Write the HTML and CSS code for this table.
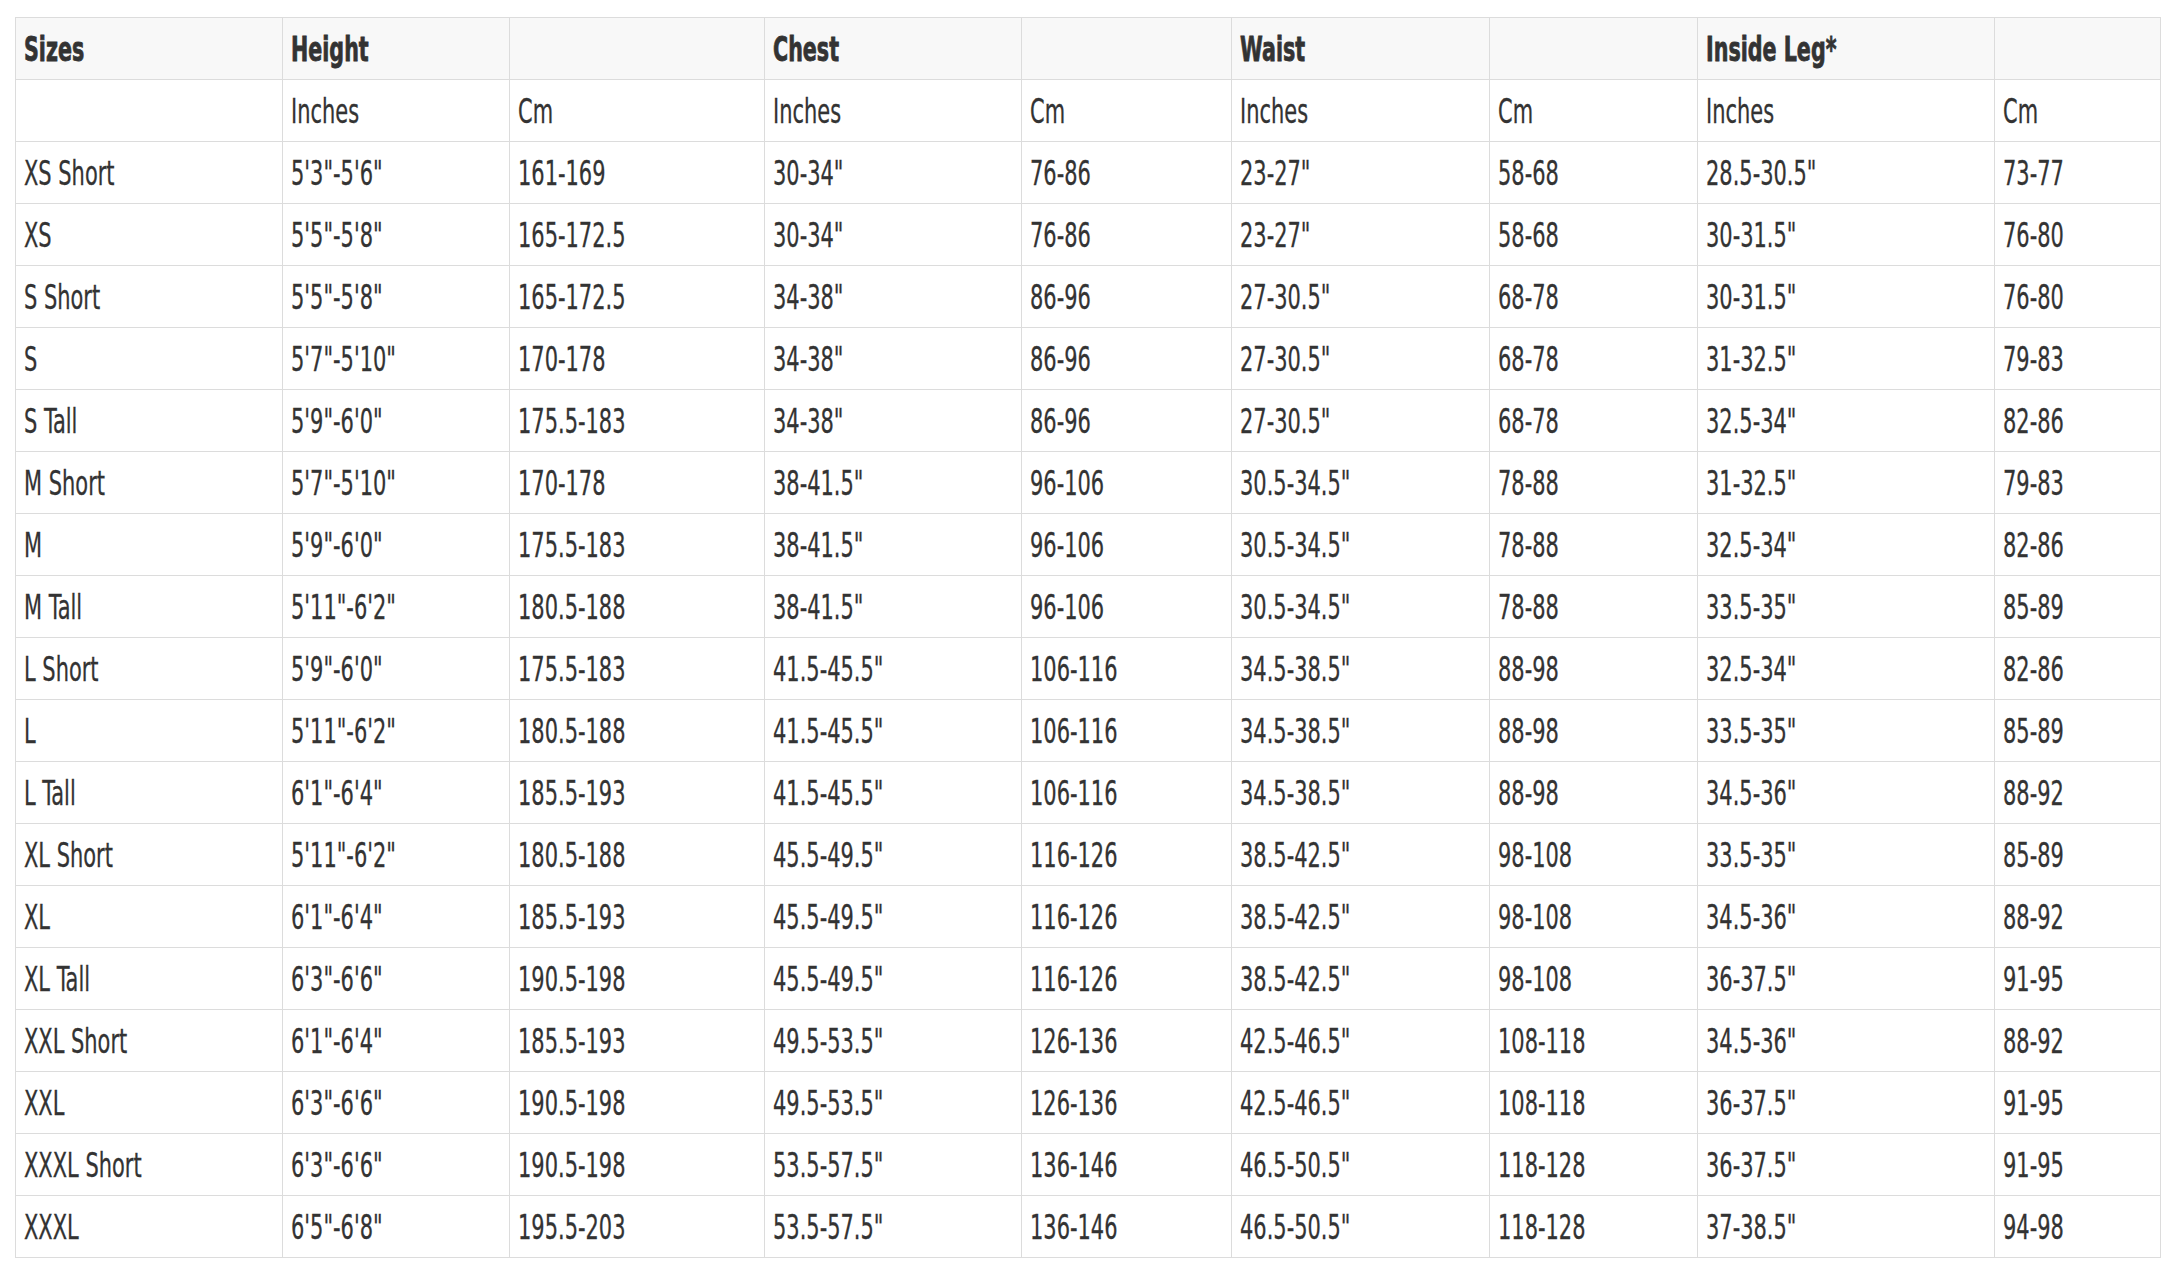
FILE: index.html
```html
<!DOCTYPE html>
<html lang="en">
<head>
<meta charset="utf-8">
<title>Size Chart</title>
<link rel="stylesheet" href="styles.css">
</head>
<body>
<div class="page">
<table class="sizes">
<colgroup>
<col class="c1"><col class="c2"><col class="c3"><col class="c4"><col class="c5"><col class="c6"><col class="c7"><col class="c8"><col class="c9">
</colgroup>
<thead>
<tr class="head"><th><span class="t">Sizes</span></th><th><span class="t">Height</span></th><th></th><th><span class="t">Chest</span></th><th></th><th><span class="t">Waist</span></th><th></th><th><span class="t">Inside Leg*</span></th><th></th></tr>
</thead>
<tbody>
<tr><td></td><td><span class="t">Inches</span></td><td><span class="t">Cm</span></td><td><span class="t">Inches</span></td><td><span class="t">Cm</span></td><td><span class="t">Inches</span></td><td><span class="t">Cm</span></td><td><span class="t">Inches</span></td><td><span class="t">Cm</span></td></tr>
<tr><td><span class="t">XS Short</span></td><td><span class="t">5'3"-5'6"</span></td><td><span class="t">161-169</span></td><td><span class="t">30-34"</span></td><td><span class="t">76-86</span></td><td><span class="t">23-27"</span></td><td><span class="t">58-68</span></td><td><span class="t">28.5-30.5"</span></td><td><span class="t">73-77</span></td></tr>
<tr><td><span class="t">XS</span></td><td><span class="t">5'5"-5'8"</span></td><td><span class="t">165-172.5</span></td><td><span class="t">30-34"</span></td><td><span class="t">76-86</span></td><td><span class="t">23-27"</span></td><td><span class="t">58-68</span></td><td><span class="t">30-31.5"</span></td><td><span class="t">76-80</span></td></tr>
<tr><td><span class="t">S Short</span></td><td><span class="t">5'5"-5'8"</span></td><td><span class="t">165-172.5</span></td><td><span class="t">34-38"</span></td><td><span class="t">86-96</span></td><td><span class="t">27-30.5"</span></td><td><span class="t">68-78</span></td><td><span class="t">30-31.5"</span></td><td><span class="t">76-80</span></td></tr>
<tr><td><span class="t">S</span></td><td><span class="t">5'7"-5'10"</span></td><td><span class="t">170-178</span></td><td><span class="t">34-38"</span></td><td><span class="t">86-96</span></td><td><span class="t">27-30.5"</span></td><td><span class="t">68-78</span></td><td><span class="t">31-32.5"</span></td><td><span class="t">79-83</span></td></tr>
<tr><td><span class="t">S Tall</span></td><td><span class="t">5'9"-6'0"</span></td><td><span class="t">175.5-183</span></td><td><span class="t">34-38"</span></td><td><span class="t">86-96</span></td><td><span class="t">27-30.5"</span></td><td><span class="t">68-78</span></td><td><span class="t">32.5-34"</span></td><td><span class="t">82-86</span></td></tr>
<tr><td><span class="t">M Short</span></td><td><span class="t">5'7"-5'10"</span></td><td><span class="t">170-178</span></td><td><span class="t">38-41.5"</span></td><td><span class="t">96-106</span></td><td><span class="t">30.5-34.5"</span></td><td><span class="t">78-88</span></td><td><span class="t">31-32.5"</span></td><td><span class="t">79-83</span></td></tr>
<tr><td><span class="t">M</span></td><td><span class="t">5'9"-6'0"</span></td><td><span class="t">175.5-183</span></td><td><span class="t">38-41.5"</span></td><td><span class="t">96-106</span></td><td><span class="t">30.5-34.5"</span></td><td><span class="t">78-88</span></td><td><span class="t">32.5-34"</span></td><td><span class="t">82-86</span></td></tr>
<tr><td><span class="t">M Tall</span></td><td><span class="t">5'11"-6'2"</span></td><td><span class="t">180.5-188</span></td><td><span class="t">38-41.5"</span></td><td><span class="t">96-106</span></td><td><span class="t">30.5-34.5"</span></td><td><span class="t">78-88</span></td><td><span class="t">33.5-35"</span></td><td><span class="t">85-89</span></td></tr>
<tr><td><span class="t">L Short</span></td><td><span class="t">5'9"-6'0"</span></td><td><span class="t">175.5-183</span></td><td><span class="t">41.5-45.5"</span></td><td><span class="t">106-116</span></td><td><span class="t">34.5-38.5"</span></td><td><span class="t">88-98</span></td><td><span class="t">32.5-34"</span></td><td><span class="t">82-86</span></td></tr>
<tr><td><span class="t">L</span></td><td><span class="t">5'11"-6'2"</span></td><td><span class="t">180.5-188</span></td><td><span class="t">41.5-45.5"</span></td><td><span class="t">106-116</span></td><td><span class="t">34.5-38.5"</span></td><td><span class="t">88-98</span></td><td><span class="t">33.5-35"</span></td><td><span class="t">85-89</span></td></tr>
<tr><td><span class="t">L Tall</span></td><td><span class="t">6'1"-6'4"</span></td><td><span class="t">185.5-193</span></td><td><span class="t">41.5-45.5"</span></td><td><span class="t">106-116</span></td><td><span class="t">34.5-38.5"</span></td><td><span class="t">88-98</span></td><td><span class="t">34.5-36"</span></td><td><span class="t">88-92</span></td></tr>
<tr><td><span class="t">XL Short</span></td><td><span class="t">5'11"-6'2"</span></td><td><span class="t">180.5-188</span></td><td><span class="t">45.5-49.5"</span></td><td><span class="t">116-126</span></td><td><span class="t">38.5-42.5"</span></td><td><span class="t">98-108</span></td><td><span class="t">33.5-35"</span></td><td><span class="t">85-89</span></td></tr>
<tr><td><span class="t">XL</span></td><td><span class="t">6'1"-6'4"</span></td><td><span class="t">185.5-193</span></td><td><span class="t">45.5-49.5"</span></td><td><span class="t">116-126</span></td><td><span class="t">38.5-42.5"</span></td><td><span class="t">98-108</span></td><td><span class="t">34.5-36"</span></td><td><span class="t">88-92</span></td></tr>
<tr><td><span class="t">XL Tall</span></td><td><span class="t">6'3"-6'6"</span></td><td><span class="t">190.5-198</span></td><td><span class="t">45.5-49.5"</span></td><td><span class="t">116-126</span></td><td><span class="t">38.5-42.5"</span></td><td><span class="t">98-108</span></td><td><span class="t">36-37.5"</span></td><td><span class="t">91-95</span></td></tr>
<tr><td><span class="t">XXL Short</span></td><td><span class="t">6'1"-6'4"</span></td><td><span class="t">185.5-193</span></td><td><span class="t">49.5-53.5"</span></td><td><span class="t">126-136</span></td><td><span class="t">42.5-46.5"</span></td><td><span class="t">108-118</span></td><td><span class="t">34.5-36"</span></td><td><span class="t">88-92</span></td></tr>
<tr><td><span class="t">XXL</span></td><td><span class="t">6'3"-6'6"</span></td><td><span class="t">190.5-198</span></td><td><span class="t">49.5-53.5"</span></td><td><span class="t">126-136</span></td><td><span class="t">42.5-46.5"</span></td><td><span class="t">108-118</span></td><td><span class="t">36-37.5"</span></td><td><span class="t">91-95</span></td></tr>
<tr><td><span class="t">XXXL Short</span></td><td><span class="t">6'3"-6'6"</span></td><td><span class="t">190.5-198</span></td><td><span class="t">53.5-57.5"</span></td><td><span class="t">136-146</span></td><td><span class="t">46.5-50.5"</span></td><td><span class="t">118-128</span></td><td><span class="t">36-37.5"</span></td><td><span class="t">91-95</span></td></tr>
<tr><td><span class="t">XXXL</span></td><td><span class="t">6'5"-6'8"</span></td><td><span class="t">195.5-203</span></td><td><span class="t">53.5-57.5"</span></td><td><span class="t">136-146</span></td><td><span class="t">46.5-50.5"</span></td><td><span class="t">118-128</span></td><td><span class="t">37-38.5"</span></td><td><span class="t">94-98</span></td></tr>
</tbody>
</table>
</div>
</body>
</html>
```

FILE: styles.css
```css
html, body {
  margin: 0;
  padding: 0;
  background: #ffffff;
}

.page {
  padding: 17px 0 0 15px;
}

.sizes {
  width: 2146px;
  table-layout: fixed;
  border-collapse: separate;
  border-spacing: 0;
  border-top: 1px solid #dcdcdc;
  border-left: 1px solid #dcdcdc;
  font-family: "DejaVu Sans Condensed", "DejaVu Sans", sans-serif;
  font-stretch: condensed;
  color: #333333;
}

.c1 { width: 267px; }
.c2 { width: 227px; }
.c3 { width: 255px; }
.c4 { width: 257px; }
.c5 { width: 210px; }
.c6 { width: 258px; }
.c7 { width: 208px; }
.c8 { width: 297px; }
.c9 { width: 166px; }

.sizes th,
.sizes td {
  box-sizing: border-box;
  border-right: 1px solid #dcdcdc;
  border-bottom: 1px solid #dcdcdc;
  text-align: left;
  vertical-align: top;
  white-space: nowrap;
  padding: 1px 8px 0 8px;
  height: 62px;
  line-height: 60px;
  font-size: 34px;
  font-weight: 400;
}

.sizes th {
  background: #f8f8f8;
  font-weight: 700;
}

.t {
  display: inline-block;
  transform: scaleX(0.685);
  transform-origin: 0 50%;
  -webkit-text-stroke: 0.3px #333333;
}

.sizes th .t {
  transform: scaleX(0.675);
  -webkit-text-stroke: 0.8px #333333;
}
```
